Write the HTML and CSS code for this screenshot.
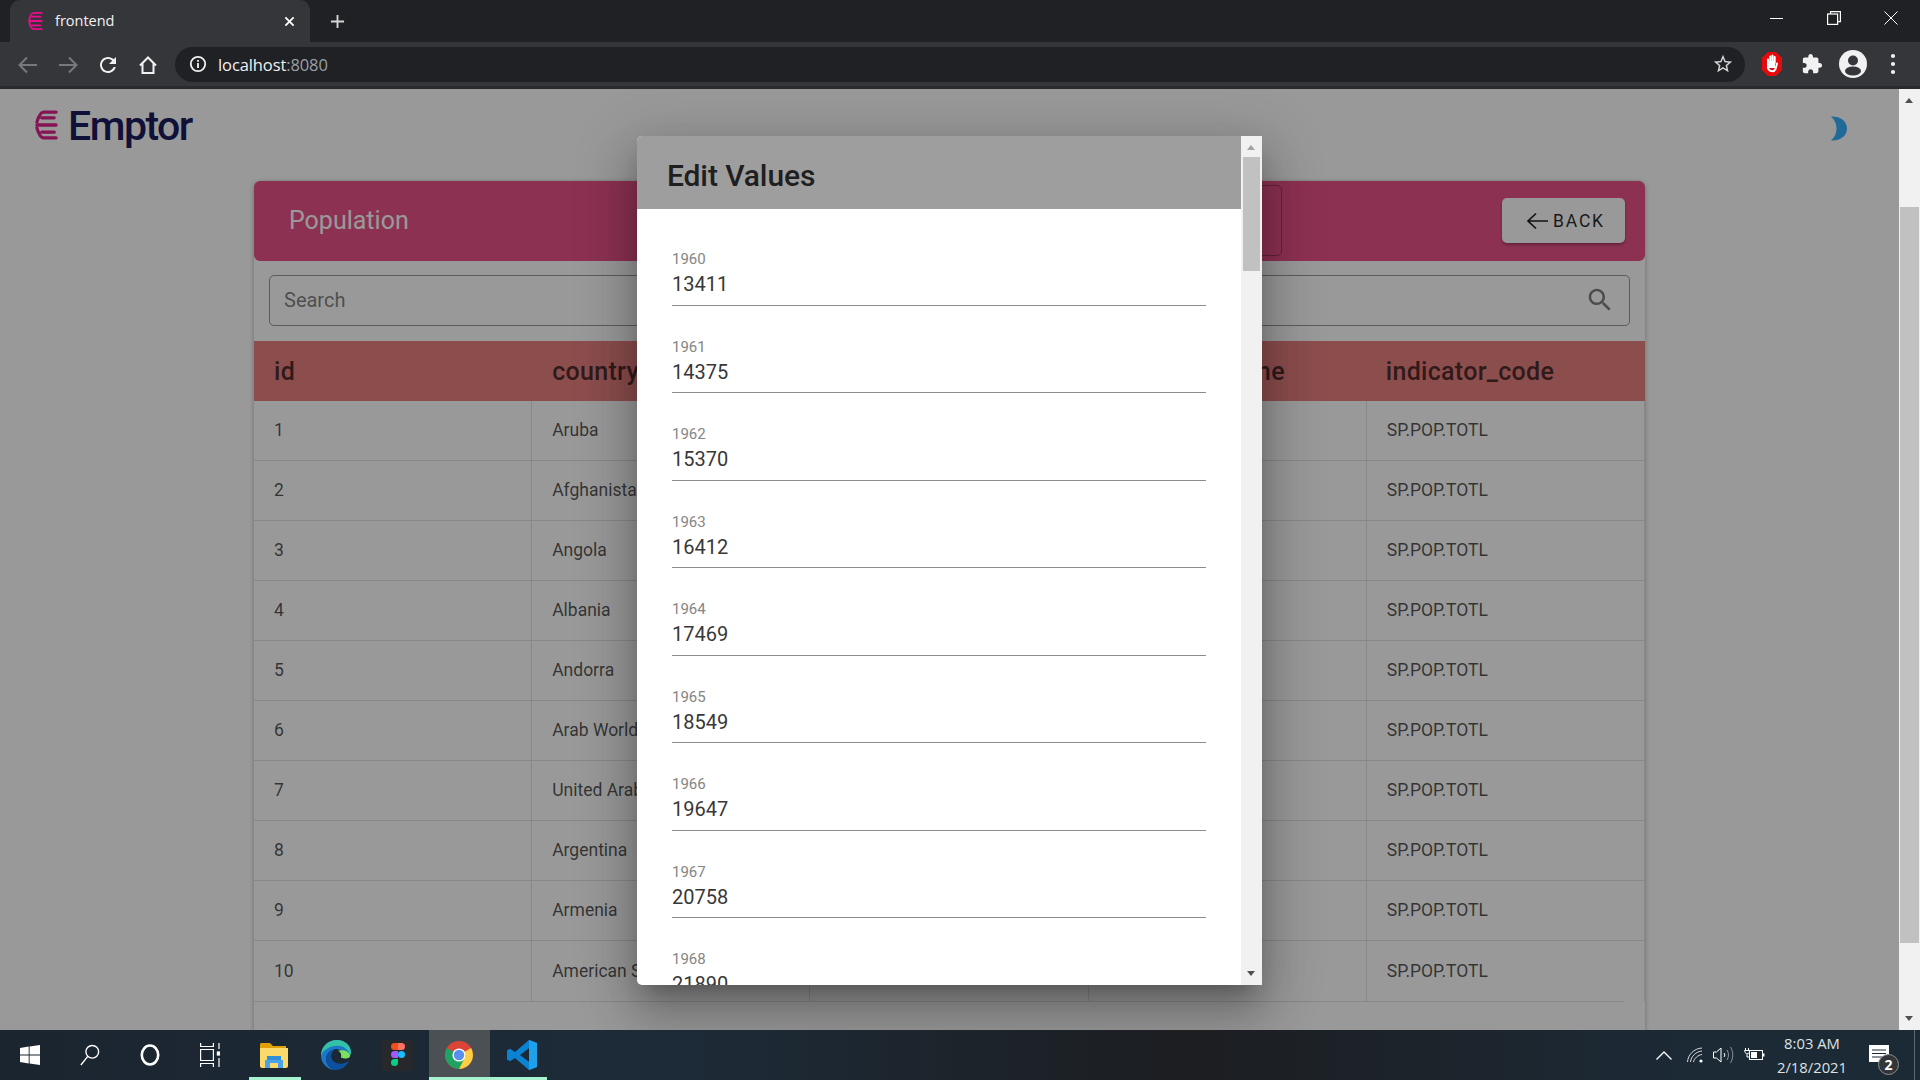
FILE: index.html
```html
<!DOCTYPE html>
<html lang="en">
<head>
  <meta charset="UTF-8">
  <title>frontend</title>
  <link rel="stylesheet" href="styles.css">
</head>
<body>
  <!-- browser frame -->
  <header class="chrome">
    <div class="tab-strip">
      <div class="tab">
        <svg class="tab-icon" viewBox="0 0 24 32" fill="none" stroke="#ec0b8c" stroke-width="3" stroke-linecap="round"><path d="M22 3H9C6 3 4 6 2 14"/><path d="M7 9H20"/><path d="M2 16H22"/><path d="M7 23H20"/><path d="M22 29H9C6 29 4 26 2 18"/></svg>
        <span class="tab-title">frontend</span>
        <svg class="tab-close" viewBox="0 0 12 12" stroke="#fff" stroke-width="2"><path d="M1.5 1.5L10.5 10.5M10.5 1.5L1.5 10.5"/></svg>
      </div>
      <svg class="new-tab" viewBox="0 0 16 16" stroke="#d5d6d8" stroke-width="2"><path d="M8 1V15M1 8H15"/></svg>
      <div class="win-controls">
        <svg class="win-btn" viewBox="0 0 14 14" stroke="#fff" fill="none"><path d="M0 7.5H13"/></svg>
        <svg class="win-btn" viewBox="0 0 14 14" stroke="#fff" fill="none" stroke-width="1.2"><rect x="0.6" y="3" width="10" height="10.4"/><path d="M3.5 3V0.6H13.4V10.6H10.6"/></svg>
        <svg class="win-btn" viewBox="0 0 14 14" stroke="#fff" fill="none"><path d="M0.5 0.5L13.5 13.5M13.5 0.5L0.5 13.5"/></svg>
      </div>
    </div>
    <div class="toolbar">
      <svg class="tool-icon" viewBox="0 0 24 24" fill="none" stroke="#78797c" stroke-width="2"><path d="M21 12H4M11 4.5L3.5 12L11 19.5"/></svg>
      <svg class="tool-icon" viewBox="0 0 24 24" fill="none" stroke="#78797c" stroke-width="2"><path d="M3 12H20M13 4.5L20.5 12L13 19.5"/></svg>
      <svg class="tool-icon" viewBox="0 0 24 24" fill="#f1f1f2"><path d="M17.65 6.35C16.2 4.9 14.21 4 12 4c-4.42 0-7.99 3.58-7.99 8s3.57 8 7.99 8c3.73 0 6.84-2.55 7.73-6h-2.08c-.82 2.33-3.04 4-5.65 4-3.31 0-6-2.69-6-6s2.69-6 6-6c1.66 0 3.14.69 4.22 1.78L13 11h7V4l-2.35 2.35z"/></svg>
      <svg class="tool-icon" viewBox="0 0 24 24" fill="none" stroke="#f1f1f2" stroke-width="2"><path d="M4 12.5L12 4.500L20 12.500M6.500 10.500V20H17.500V10.500"/></svg>
      <div class="omnibox">
        <svg class="info-icon" viewBox="0 0 20 20"><circle cx="10" cy="10" r="8" fill="none" stroke="#f1f1f2" stroke-width="2"/><path d="M10 5.5V7.5M10 9V14.5" stroke="#f1f1f2" stroke-width="2"/></svg>
        <span class="url">localhost<span class="url-port">:8080</span></span>
        <svg class="star-icon" viewBox="0 0 24 24" fill="#d5d6d8"><path d="M22 9.24l-7.19-.62L12 2 9.19 8.63 2 9.24l5.46 4.73L5.82 21 12 17.27 18.18 21l-1.63-7.03L22 9.24zM12 15.4l-3.76 2.27 1-4.28-3.32-2.88 4.38-.38L12 6.1l1.71 4.04 4.38.38-3.32 2.88 1 4.28L12 15.4z"/></svg>
      </div>
      <div class="extensions">
        <svg class="ext-stop" viewBox="0 0 20 24"><path d="M6 0H14L20 6V18L14 24H6L0 18V6Z" fill="#e60a0a"/><path d="M6 11V7.5M8.3 11V4.5M10.5 11V3.5M12.7 11V5M6 10V16C7 19.5 12 20.5 13.5 17L15 11.5" stroke="#fff" stroke-width="2" stroke-linecap="round" fill="none"/><path d="M6.5 9H13V16H7Z" fill="#fff"/></svg>
        <svg class="ext-puzzle" viewBox="0 0 24 24" fill="#f1f1f2"><path d="M20.5 11H19V7c0-1.1-.9-2-2-2h-4V3.5C13 2.12 11.88 1 10.5 1S8 2.12 8 3.5V5H4c-1.1 0-1.99.9-1.99 2v3.8H3.5c1.49 0 2.7 1.21 2.7 2.7s-1.21 2.7-2.7 2.7H2V20c0 1.1.9 2 2 2h3.8v-1.5c0-1.49 1.21-2.7 2.7-2.7 1.49 0 2.7 1.21 2.7 2.7V22H17c1.1 0 2-.9 2-2v-4h1.5c1.38 0 2.5-1.12 2.5-2.5S21.88 11 20.5 11z"/></svg>
        <svg class="ext-avatar" viewBox="0 0 28 28"><circle cx="14" cy="14" r="14" fill="#f1f1f2"/><circle cx="14" cy="10.5" r="5" fill="#35363a"/><ellipse cx="14" cy="21" rx="8" ry="4.5" fill="#35363a"/></svg>
        <svg class="ext-menu" viewBox="0 0 6 22" fill="#f1f1f2"><circle cx="3" cy="3" r="2.1"/><circle cx="3" cy="11" r="2.1"/><circle cx="3" cy="19" r="2.1"/></svg>
      </div>
    </div>
  </header>

  <div class="viewport">
    <div class="page-wrap">
      <main class="page">
        <div class="topbar">
          <div class="logo">
            <svg class="logo-mark" viewBox="0 0 24 32" fill="none" stroke="#e0218a" stroke-width="3.4" stroke-linecap="round"><path d="M22 2.5H9C6 2.5 4 6 2 13"/><path d="M7 8.5H20"/><path d="M2 16H22"/><path d="M7 23.5H20"/><path d="M22 29.5H9C6 29.5 4 26 2 19"/></svg>
            <span class="logo-text">Emptor</span>
          </div>
          <svg class="moon" viewBox="0 0 17 25"><path d="M1 .5C10 0 17 5 17 12.5C17 20 10 25 1 24.5C5 21 6.500 17 6.500 12.500C6.500 8 5 4 1 .5Z"/></svg>
        </div>

        <section class="card">
          <div class="card-head">
            <h2 class="card-title">Population</h2>
            <div class="filter-box"></div>
            <button class="back-btn">
              <svg class="back-arrow" viewBox="0 0 22 18" fill="none" stroke="#212121" stroke-width="1.7"><path d="M22 9H2M10 1.5L2 9L10 16.5"/></svg>
              Back
            </button>
          </div>
          <div class="search-row">
            <div class="search-box">
              <span class="search-text">Search</span>
              <svg class="search-icon" viewBox="0 0 24 24"><path d="M15.5 14h-.79l-.28-.27C15.41 12.59 16 11.11 16 9.5 16 5.91 13.09 3 9.5 3S3 5.91 3 9.5 5.91 16 9.5 16c1.61 0 3.09-.59 4.23-1.57l.27.28v.79l5 4.99L20.49 19l-4.99-5zm-6 0C7.01 14 5 11.99 5 9.5S7.01 5 9.5 5 14 7.01 14 9.5 11.99 14 9.5 14z"/></svg>
            </div>
          </div>
          <table class="data-table">
            <thead>
              <tr><th>id</th><th>country_name</th><th>country_code</th><th>indicator_name</th><th>indicator_code</th></tr>
            </thead>
            <tbody>
              <tr><td>1</td><td>Aruba</td><td>ABW</td><td>Population, total</td><td>SP.POP.TOTL</td></tr>
              <tr><td>2</td><td>Afghanistan</td><td>AFG</td><td>Population, total</td><td>SP.POP.TOTL</td></tr>
              <tr><td>3</td><td>Angola</td><td>AGO</td><td>Population, total</td><td>SP.POP.TOTL</td></tr>
              <tr><td>4</td><td>Albania</td><td>ALB</td><td>Population, total</td><td>SP.POP.TOTL</td></tr>
              <tr><td>5</td><td>Andorra</td><td>AND</td><td>Population, total</td><td>SP.POP.TOTL</td></tr>
              <tr><td>6</td><td>Arab World</td><td>ARB</td><td>Population, total</td><td>SP.POP.TOTL</td></tr>
              <tr><td>7</td><td>United Arab Emirates</td><td>ARE</td><td>Population, total</td><td>SP.POP.TOTL</td></tr>
              <tr><td>8</td><td>Argentina</td><td>ARG</td><td>Population, total</td><td>SP.POP.TOTL</td></tr>
              <tr><td>9</td><td>Armenia</td><td>ARM</td><td>Population, total</td><td>SP.POP.TOTL</td></tr>
              <tr><td>10</td><td>American Samoa</td><td>ASM</td><td>Population, total</td><td>SP.POP.TOTL</td></tr>
            </tbody>
          </table>
          <div class="table-end"></div>
        </section>
      </main>

      <div class="overlay">
        <div class="modal">
          <div class="modal-main">
            <h3 class="modal-title">Edit Values</h3>
            <div class="modal-body">
              <div class="field"><label>1960</label><div class="field-value">13411</div></div>
              <div class="field"><label>1961</label><div class="field-value">14375</div></div>
              <div class="field"><label>1962</label><div class="field-value">15370</div></div>
              <div class="field"><label>1963</label><div class="field-value">16412</div></div>
              <div class="field"><label>1964</label><div class="field-value">17469</div></div>
              <div class="field"><label>1965</label><div class="field-value">18549</div></div>
              <div class="field"><label>1966</label><div class="field-value">19647</div></div>
              <div class="field"><label>1967</label><div class="field-value">20758</div></div>
              <div class="field"><label>1968</label><div class="field-value">21890</div></div>
            </div>
          </div>
          <div class="modal-scroll">
            <span class="arrow-up arrow-faint"></span>
            <div class="modal-thumb"></div>
            <span class="arrow-down"></span>
          </div>
        </div>
      </div>
    </div>

    <div class="page-scroll">
      <span class="arrow-up"></span>
      <div class="page-thumb"></div>
      <span class="arrow-down"></span>
    </div>
  </div>

  <footer class="taskbar">
    <div class="task-slot">
      <svg class="task-win" viewBox="0 0 20 20" fill="#fff"><path d="M0 3L8.7 1.6V9.5H0ZM9.6 1.5L20 0V9.5H9.6ZM0 10.5H8.7V18.4L0 17ZM9.6 10.5H20V20L9.6 18.5Z"/></svg>
    </div>
    <div class="task-slot">
      <svg class="task-glyph" viewBox="0 0 22 24" fill="none" stroke="#fff" stroke-width="1.5"><circle cx="13.5" cy="8.5" r="7"/><path d="M8.5 13.5L1 23"/></svg>
    </div>
    <div class="task-slot">
      <svg class="task-glyph" viewBox="0 0 20 24" fill="none" stroke="#fff" stroke-width="2.6"><ellipse cx="10" cy="12" rx="8.2" ry="9.5"/></svg>
    </div>
    <div class="task-slot">
      <svg class="task-glyph" viewBox="0 0 20 24" fill="none" stroke="#fff" stroke-width="1.2"><path d="M0.6 0V3.5H13.4V0M0.6 24V20.5H13.4V24M0.6 6.5H13.4V17.5H0.6ZM19 0V6M19 9V12M19 15V24"/><rect x="17.4" y="9" width="3" height="3" fill="#fff"/></svg>
    </div>
    <div class="task-slot task-app">
      <svg class="task-icon task-folder" viewBox="0 0 28 28"><path d="M0 3.5C0 2.5.7 2 1.500 2H10L13 5H26V10H0Z" fill="#e0a106"/><path d="M0 7H28V25C28 26 27 27 26 27H2C1 27 0 26 0 25Z" fill="#fcd96b"/><path d="M7 15H21V19H7Z" fill="#2f8fd8"/><path d="M5 27V19H23V27H18V22H10V27Z" fill="#4aa3e8"/></svg>
    </div>
    <div class="task-slot">
      <svg class="task-icon task-edge" viewBox="0 0 30 36" preserveAspectRatio="none"><path d="M0 19C0 8 7 0 16 0C24 0 30 7 30 15C30 21 24 23 20 21C23 16 19 10 14 11C8 12 5 18 5 23C5 28 8 33 13 36C6 35 0 28 0 19Z" fill="#1b78c8"/><path d="M0 19C0 8 7 0 16 0C24 0 30 7 30 15C30 16 30 17 29 18C27 10 21 6 15 7C8 8 2 12 0 19Z" fill="#35c1a8"/><path d="M29 18C30 21 25 24 20 21C21 17 19 14 17 13C23 11 27 13 29 18Z" fill="#7be05f"/><path d="M13 36C8 33 5 28 5 23C5 18 8 12 14 11C10 15 9 20 12 25C16 30 24 29 28 25C26 32 19 37 13 36Z" fill="#0e4f9e"/></svg>
    </div>
    <div class="task-slot">
      <div class="figma-tile">
        <svg class="figma-icon" viewBox="0 0 14 24"><path d="M7 0H3.500a3.500 3.500 0 0 0 0 7H7Z" fill="#f24e1e"/><path d="M7 0H10.500a3.500 3.500 0 0 1 0 7H7Z" fill="#ff7262"/><path d="M7 8H3.500a3.500 3.500 0 0 0 0 7H7Z" fill="#a259ff"/><circle cx="10.500" cy="11.500" r="3.500" fill="#1abcfe"/><path d="M3.500 16H7V19.500a3.500 3.500 0 1 1-3.500-3.500Z" fill="#0acf83"/></svg>
      </div>
    </div>
    <div class="task-slot task-active">
      <svg class="task-icon" viewBox="0 0 28 28"><circle cx="14" cy="14" r="14" fill="#db4437"/><path d="M14 14L1.900 7A14 14 0 0 0 14 28L21 16Z" fill="#1ea362"/><path d="M14 14L26.100 7A14 14 0 0 1 14 28L21 14Z" fill="#fcd045"/><circle cx="14" cy="14" r="6.600" fill="#fff"/><circle cx="14" cy="14" r="5.200" fill="#5a8ff0"/></svg>
    </div>
    <div class="task-slot task-app task-code">
      <svg class="task-icon task-vscode" viewBox="0 0 30 36" preserveAspectRatio="none"><path d="M22 0L30 3.500V32.500L22 36L8 21.500L3 25.500L0 23.500V12.500L3 10.500L8 14.500ZM22 10L13 18L22 26Z" fill="#0a83d4"/><path d="M22 0L30 3.500V32.500L22 36Z" fill="#1fa0ea"/></svg>
    </div>

    <div class="tray">
      <svg class="tray-caret" viewBox="0 0 16 9" fill="none" stroke="#fff" stroke-width="1.3"><path d="M.5 8.500L8 1L15.500 8.500"/></svg>
      <svg class="tray-wifi" viewBox="0 0 16 16" fill="none" stroke="#d8dadc"><path d="M.5 15C1 7.500 7 1.500 15 1"/><path d="M3.500 15C4 9.500 9 4.500 15 4" /><path d="M6.500 15C7 11.500 11 8 15 7.500"/><circle cx="14" cy="14" r="1.600" fill="#fff" stroke="none"/></svg>
      <svg class="tray-sound" viewBox="0 0 21 18" fill="none" stroke="#fff"><path d="M.5 6H3.500L8 2V16L3.500 12H.5Z"/><path d="M11 7C12 8 12 10 11 11"/><path d="M14 4C16 7 16 11 14 14" stroke="#8a9096"/><path d="M17.500 1C20.500 6 20.500 12 17.500 17" stroke="#8a9096"/></svg>
      <svg class="tray-battery" viewBox="0 0 21 14" fill="none" stroke="#fff"><path d="M1.500 0V2M4.500 0V2M.5 2.500H5.500V4C5.500 6 1 6 1 4ZM3 6V9H5.500" /><rect x="5.500" y="2.500" width="13" height="9"/><rect x="7" y="4" width="6" height="6" fill="#fff" stroke="none"/><rect x="19" y="5.500" width="1.500" height="3" fill="#fff" stroke="none"/></svg>
      <div class="clock"><span>8:03 AM</span><span>2/18/2021</span></div>
      <div class="notify">
        <svg class="notify-icon" viewBox="0 0 20 18"><path d="M0 0H20V17H0Z" fill="#fff"/><path d="M3 5H17M3 8.500H17M3 12H17" stroke="#1c2a36" stroke-width="1.200"/></svg>
        <span class="notify-badge">2</span>
      </div>
      <div class="show-desktop"></div>
    </div>
  </footer>
</body>
</html>
```

FILE: styles.css
```css
* {
  margin: 0;
  padding: 0;
  box-sizing: border-box;
}

body {
  display: flex;
  flex-direction: column;
  width: 1920px;
  height: 1080px;
  overflow: hidden;
  font-family: Roboto, sans-serif;
  background: #fff;
}

svg {
  display: block;
  flex: none;
}

/* browser frame */
.chrome {
  flex: none;
  height: 89px;
  background: #35363a;
  border-bottom: 3px solid #292a2d;
  font-family: "Open Sans", sans-serif;
}

.tab-strip {
  display: flex;
  align-items: center;
  height: 42px;
  padding-left: 10px;
  background: #202124;
}

.tab {
  display: flex;
  align-items: center;
  width: 300px;
  height: 42px;
  padding: 0 15px 0 18px;
  background: #35363a;
  border-radius: 10px 10px 0 0;
}

.tab-icon {
  width: 15px;
  height: 20px;
}

.tab-title {
  flex: 1;
  margin-left: 12px;
  margin-top: -1px;
  font-size: 14.5px;
  color: #f1f1f2;
}

.tab-close {
  width: 11px;
  height: 11px;
}

.new-tab {
  width: 15px;
  height: 15px;
  margin-left: 20px;
}

.win-controls {
  display: flex;
  align-items: center;
  gap: 43px;
  margin-left: auto;
  padding-right: 22px;
}

.win-btn {
  width: 14px;
  height: 14px;
  margin-top: -7px;
}

.toolbar {
  display: flex;
  align-items: center;
  height: 44px;
  padding-left: 16px;
  gap: 16px;
}

.tool-icon {
  width: 24px;
  height: 24px;
  margin-top: 1px;
}

.omnibox {
  display: flex;
  align-items: center;
  width: 1570px;
  height: 35px;
  margin-left: -1px;
  padding: 0 11px 0 14px;
  background: #202124;
  border-radius: 18px;
}

.info-icon {
  width: 18px;
  height: 18px;
}

.url {
  flex: 1;
  margin-left: 11px;
  padding-top: 1px;
  font-size: 16.5px;
  letter-spacing: -0.1px;
  color: #f1f1f2;
}

.url-port {
  color: #9aa0a6;
}

.star-icon {
  width: 22px;
  height: 22px;
}

.extensions {
  display: flex;
  align-items: center;
  margin-left: 1px;
}

.ext-stop {
  width: 20px;
  height: 24px;
}

.ext-puzzle {
  width: 22px;
  height: 22px;
  margin-left: 19px;
}

.ext-avatar {
  width: 28px;
  height: 28px;
  margin-left: 16px;
}

.ext-menu {
  width: 6px;
  height: 22px;
  margin-left: 23px;
}

/* page area */
.viewport {
  display: flex;
  flex: none;
  height: 941px;
}

.page-wrap {
  position: relative;
  flex: 1;
  overflow: hidden;
}

.page {
  height: 100%;
}

.topbar {
  display: flex;
  justify-content: space-between;
  height: 92px;
  padding: 17px 52px 0 35px;
}

.logo {
  display: flex;
  align-items: flex-start;
  gap: 10px;
}

.logo-mark {
  width: 23px;
  height: 32px;
  margin-top: 3px;
}

.logo-text {
  font-size: 41px;
  line-height: 41px;
  font-weight: 500;
  letter-spacing: -1.5px;
  color: #1b1b60;
}

.moon {
  width: 17px;
  height: 25px;
  margin-top: 10px;
  fill: #34b1ff;
}

.card {
  width: 1391px;
  margin: 0 auto;
  padding-bottom: 100px;
  background: #fff;
  border-radius: 6px;
  box-shadow: 0 1px 5px rgba(0, 0, 0, 0.3);
}

.card-head {
  display: flex;
  align-items: center;
  height: 80px;
  padding: 0 20px 2px 35px;
  background: #eb5389;
  border-radius: 6px;
}

.card-title {
  margin-top: 1px;
  font-size: 25px;
  font-weight: 400;
  color: #fff;
}

.filter-box {
  width: 300px;
  height: 71px;
  margin-left: auto;
  margin-right: 220px;
  border: 1px solid rgba(0, 0, 0, 0.3);
  border-radius: 5px;
}

.back-btn {
  display: flex;
  align-items: center;
  justify-content: center;
  gap: 5px;
  width: 123px;
  height: 45px;
  padding: 1px 0 0 4px;
  background: #fff;
  border: none;
  border-radius: 5px;
  box-shadow: 0 2px 3px rgba(0, 0, 0, 0.3);
  font-family: Roboto, sans-serif;
  font-size: 17.5px;
  font-weight: 400;
  letter-spacing: 1.8px;
  text-transform: uppercase;
  color: rgba(0, 0, 0, 0.85);
}

.back-arrow {
  width: 22px;
  height: 18px;
}

.search-row {
  padding: 14px 15px 15px;
}

.search-box {
  display: flex;
  align-items: center;
  justify-content: space-between;
  height: 51px;
  padding: 0 14px 1px;
  border: 1px solid rgba(0, 0, 0, 0.4);
  border-radius: 5px;
}

.search-text {
  font-size: 20px;
  color: rgba(0, 0, 0, 0.5);
}

.search-icon {
  width: 30px;
  height: 30px;
  fill: rgba(0, 0, 0, 0.5);
}

.data-table {
  width: 100%;
  table-layout: fixed;
  border-collapse: separate;
  border-spacing: 0;
}

.data-table th {
  height: 60px;
  padding: 1px 20px 0;
  background: #e98080;
  font-size: 25px;
  font-weight: 500;
  letter-spacing: 0.3px;
  text-align: left;
  color: rgba(0, 0, 0, 0.68);
}

.data-table th:last-child {
  padding-left: 19px;
}

.data-table td {
  height: 60px;
  padding: 0 20px 1px;
  font-size: 17.5px;
  color: rgba(0, 0, 0, 0.68);
  border-right: 1px solid #e3e3e3;
  border-bottom: 1px solid #e3e3e3;
}

.data-table tr:last-child td {
  border-bottom: none;
}

.table-end {
  margin-right: 21px;
  border-top: 1px solid #e3e3e3;
}

/* dialog */
.overlay {
  position: absolute;
  inset: 0;
  display: flex;
  justify-content: center;
  align-items: flex-start;
  padding-top: 47px;
  background: rgba(0, 0, 0, 0.4);
}

.modal {
  display: flex;
  width: 625px;
  height: 849px;
  overflow: hidden;
  background: #fff;
  border-radius: 5px 0 0 5px;
  box-shadow: 0 14px 19px -9px rgba(0, 0, 0, 0.25), 0 30px 48px 4px rgba(0, 0, 0, 0.18), 0 11px 58px 10px rgba(0, 0, 0, 0.15);
}

.modal-main {
  flex: 1;
  min-width: 0;
}

.modal-title {
  height: 73px;
  padding: 0 30px;
  background: #9e9e9e;
  font-size: 30px;
  line-height: 80px;
  font-weight: 500;
  letter-spacing: -0.1px;
  color: #1f1f1f;
}

.modal-body {
  height: 776px;
  padding: 9px 35px 0;
  overflow: hidden;
}

.field {
  display: flex;
  flex-direction: column;
  justify-content: flex-end;
  height: 87.5px;
  padding-bottom: 8.5px;
  border-bottom: 1px solid #8c8c8c;
}

.field label {
  font-size: 15px;
  line-height: 18px;
  color: #858585;
}

.field-value {
  margin-top: 4px;
  font-size: 20px;
  line-height: 24px;
  color: #383838;
}

.modal-scroll {
  position: relative;
  width: 21px;
  background: #f1f1f1;
}

.modal-thumb {
  position: absolute;
  top: 21px;
  left: 2px;
  width: 17px;
  height: 114px;
  background: #c1c1c1;
}

.page-scroll {
  position: relative;
  flex: none;
  width: 21px;
  background: #f1f1f1;
}

.page-thumb {
  position: absolute;
  top: 118px;
  left: 1px;
  width: 19px;
  height: 736px;
  background: #c1c1c1;
}

.arrow-up,
.arrow-down {
  position: absolute;
  left: 6px;
  width: 0;
  height: 0;
  border-left: 4.5px solid transparent;
  border-right: 4.5px solid transparent;
}

.arrow-up {
  top: 9px;
  border-bottom: 5px solid #505050;
}

.arrow-faint {
  border-bottom-color: #a3a3a3;
}

.arrow-down {
  bottom: 9px;
  border-top: 5px solid #505050;
}

/* windows taskbar */
.taskbar {
  display: flex;
  flex: none;
  align-items: center;
  height: 50px;
  background: linear-gradient(90deg, #1b2530, #1d2b38 35%, #1c1e21 62%, #1c2a36 88%);
}

.task-slot {
  display: flex;
  align-items: center;
  justify-content: center;
  width: 60px;
  height: 50px;
}

.task-slot:nth-child(5) {
  margin-left: 4px;
}

.task-slot:nth-child(n+5) {
  width: 61.5px;
}

.task-app,
.task-active {
  position: relative;
}

.task-app::after,
.task-active::after {
  content: "";
  position: absolute;
  bottom: 0;
  left: 5px;
  right: 5px;
  height: 3px;
  background: #a7f3d0;
}

.task-active {
  background: #4a5054;
}

.task-active::after {
  left: 0;
  right: -5px;
}

.task-code::after {
  left: 5px;
  right: 5px;
}

.task-win {
  width: 20px;
  height: 20px;
}

.task-glyph {
  width: 20px;
  height: 24px;
}

.task-icon {
  width: 28px;
  height: 28px;
}

.task-folder {
  margin-right: 2px;
}

.task-edge {
  width: 30px;
  height: 30px;
}

.task-vscode {
  width: 30px;
  height: 30px;
  margin-left: 2px;
}

.figma-tile {
  display: flex;
  align-items: center;
  justify-content: center;
  width: 31px;
  height: 31px;
  background: #26282b;
}

.figma-icon {
  width: 14px;
  height: 24px;
}

.tray {
  display: flex;
  align-items: center;
  height: 50px;
  margin-left: auto;
  font-family: "Open Sans", sans-serif;
}

.tray-caret {
  width: 16px;
  height: 9px;
}

.tray-wifi {
  width: 16px;
  height: 16px;
  margin-left: 15px;
}

.tray-sound {
  width: 21px;
  height: 18px;
  margin-left: 10px;
}

.tray-battery {
  width: 21px;
  height: 14px;
  margin-left: 10px;
}

.clock {
  display: flex;
  flex-direction: column;
  align-items: center;
  gap: 5px;
  width: 90px;
  margin-left: 2px;
  font-size: 14.8px;
  line-height: 19px;
  color: #dfe1e3;
}

.notify {
  position: relative;
  width: 34px;
  height: 50px;
  margin-left: 2px;
}

.notify-icon {
  position: absolute;
  top: 15px;
  left: 10px;
  width: 20px;
  height: 18px;
}

.notify-badge {
  position: absolute;
  top: 24px;
  left: 19px;
  width: 21px;
  height: 21px;
  background: #333639;
  border: 1px solid #8a8f93;
  border-radius: 50%;
  font-size: 14px;
  font-weight: 700;
  line-height: 19px;
  text-align: center;
  color: #fff;
}

.show-desktop {
  width: 1px;
  height: 50px;
  margin-left: 21px;
  margin-right: 5px;
  background: #5b6772;
}
```
